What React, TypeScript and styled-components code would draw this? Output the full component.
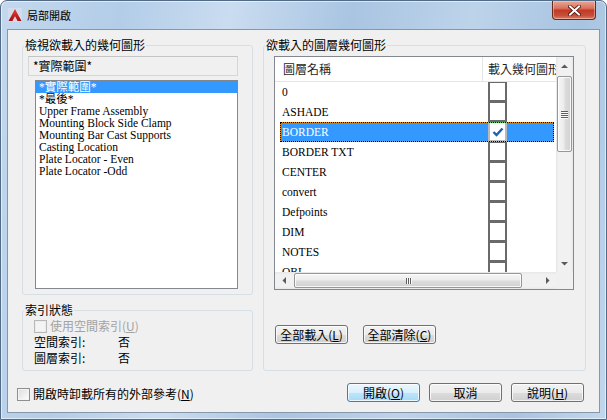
import React from "react";
import styled, { createGlobalStyle } from "styled-components";

const UI = `"Noto Sans CJK TC", "Liberation Sans", sans-serif`;
const SERIF = `"Liberation Serif", "Noto Sans CJK TC", serif`;

const GlobalStyle = createGlobalStyle`
  html, body { margin: 0; padding: 0; background: #ffffff; }
  body { font-family: ${UI}; font-size: 12px; }
  * { box-sizing: border-box; }
`;

const Window = styled.div`
  width: 607px;
  height: 420px;
  display: flex;
  flex-direction: column;
  border: 1px solid #526b87;
  border-radius: 7px 7px 0 0;
  background: linear-gradient(100deg, #c3d8ee 0%, #b3cde8 18%, #cadcf0 34%, #a9c5e2 52%, #bdd3ea 70%, #a8c4e1 86%, #c2d7ed 100%);
  box-shadow: inset 0 0 0 1px rgba(255, 255, 255, 0.55);
  overflow: hidden;
`;

const TitleBar = styled.div`
  height: 28px;
  flex: none;
  display: flex;
  align-items: center;
  padding-left: 7px;
`;

const TitleText = styled.span`
  margin-left: 5px;
  font-family: ${UI};
  font-size: 11px;
  line-height: 14px;
  color: #000;
`;

const CloseButton = styled.div`
  align-self: flex-start;
  margin-left: auto;
  margin-right: 10px;
  width: 44px;
  height: 19px;
  border: 1px solid #6a2a22;
  border-top: none;
  border-radius: 0 0 4px 4px;
  background: linear-gradient(#e9a898 0%, #d7735d 40%, #c23a27 52%, #c64d36 80%, #d9826a 100%);
  box-shadow: inset 0 0 0 1px rgba(255, 220, 210, 0.45);
  display: flex;
  align-items: center;
  justify-content: center;
`;

const Client = styled.div`
  flex: 1;
  margin: 0 6px 6px;
  border: 1px solid #8796a8;
  background: #f0f0f0;
  display: flex;
  flex-direction: column;
  font-family: ${UI};
  font-size: 12px;
  color: #000;
`;

const TopArea = styled.div`
  display: flex;
  gap: 10px;
  margin-top: 9px;
  padding-left: 14px;
`;

const LeftColumn = styled.div`
  width: 231px;
  display: flex;
  flex-direction: column;
  gap: 9px;
`;

const Group = styled.fieldset<{ $w: number; $h: number }>`
  margin: 0;
  padding: 0;
  min-width: 0;
  width: ${(p) => p.$w}px;
  height: ${(p) => p.$h}px;
  border: 1px solid #d5dfe5;
  border-radius: 3px;
`;

const Legend = styled.legend`
  padding: 0 1px;
  margin-left: 1px;
  font-size: 12px;
  line-height: 12px;
  height: 12px;
  color: #000;
`;

const ReadonlyBox = styled.div`
  margin: 5px 0 0 5px;
  width: 210px;
  height: 20px;
  border: 1px solid #d6d6d6;
  border-top-color: #c4c4c4;
  background: #f0f0f0;
  padding-left: 4px;
  line-height: 18px;
  font-size: 12px;
`;

const ListBox = styled.div`
  margin: 4px 0 0 12px;
  width: 203px;
  height: 209px;
  border: 1px solid #828790;
  background: #fff;
  overflow: hidden;
`;

const ListItem = styled.div<{ $selected?: boolean }>`
  height: 12px;
  line-height: 12px;
  padding-left: 3px;
  font-family: ${SERIF};
  font-size: 11.5px;
  white-space: nowrap;
  background: ${(p) => (p.$selected ? "#3399ff" : "transparent")};
  color: ${(p) => (p.$selected ? "#fff" : "#000")};
`;

const IndexRows = styled.div`
  margin-top: 2px;
  padding-left: 11px;
  display: flex;
  flex-direction: column;
`;

const IndexRow = styled.div`
  height: 16px;
  display: flex;
  align-items: center;
`;

const Check = styled.span<{ $disabled?: boolean }>`
  width: 13px;
  height: 13px;
  flex: none;
  border: 1px solid ${(p) => (p.$disabled ? "#b8b8b8" : "#8e8f8f")};
  background: ${(p) =>
    p.$disabled ? "#f4f4f4" : "linear-gradient(135deg, #dcdcdc 0%, #f0f0f0 60%, #ffffff 100%)"};
  box-shadow: inset 0 0 0 1px ${(p) => (p.$disabled ? "#ececec" : "#f4f4f4")};
`;

const CheckText = styled.span<{ $disabled?: boolean }>`
  margin-left: 3px;
  line-height: 14px;
  white-space: nowrap;
  color: ${(p) => (p.$disabled ? "#a3a3a3" : "#000")};
`;

const KeyLabel = styled.span`
  width: 84px;
  line-height: 14px;
`;

const ValueLabel = styled.span`
  line-height: 14px;
`;

const ListView = styled.div`
  margin: 5px 0 0 10px;
  width: 300px;
  height: 234px;
  border: 1px solid #828790;
  display: grid;
  grid-template-columns: 281px 17px;
  grid-template-rows: 215px 17px;
  background: #fff;
`;

const Viewport = styled.div`
  overflow: hidden;
  background: #fff;
`;

const Header = styled.div`
  height: 25px;
  display: flex;
  border-bottom: 1px solid #e5e5e5;
`;

const HeaderCell = styled.div<{ $w?: number; $pad: number }>`
  ${(p) => (p.$w ? `width: ${p.$w}px; flex: none;` : "flex: 1; min-width: 0;")}
  padding-left: ${(p) => p.$pad}px;
  line-height: 23px;
  font-size: 12px;
  color: #1e1e1e;
  white-space: nowrap;
  overflow: hidden;
  border-right: ${(p) => (p.$w ? "1px solid #e5e5e5" : "none")};
`;

const Row = styled.div<{ $selected?: boolean }>`
  margin-left: 5px;
  width: 274px;
  height: 20px;
  display: flex;
  align-items: stretch;
  background: ${(p) => (p.$selected ? "#3399ff" : "transparent")};
  color: ${(p) => (p.$selected ? "#fff" : "#000")};
  ${(p) =>
    p.$selected
      ? "box-shadow: inset 0 0 0 1px #e8901a; outline: 1px dotted #000; outline-offset: -1px;"
      : ""}
`;

const NameCell = styled.div`
  width: 208px;
  flex: none;
  padding-left: 2px;
  line-height: 20px;
  font-family: ${SERIF};
  font-size: 11.5px;
  white-space: nowrap;
  overflow: hidden;
`;

const CellBox = styled.div<{ $selected?: boolean }>`
  width: 19px;
  height: 20px;
  flex: none;
  border-style: solid;
  border-width: 1px 2px 2px 2px;
  border-color: ${(p) => (p.$selected ? "#6fd36f #b9b9b9 #b9b9b9 #b9b9b9" : "#6a6a6a")};
  border-top-style: ${(p) => (p.$selected ? "dotted" : "solid")};
  background: #fff;
  display: flex;
  align-items: center;
  justify-content: center;
`;

const VScroll = styled.div`
  grid-column: 2;
  grid-row: 1;
  display: flex;
  flex-direction: column;
  background: linear-gradient(to right, #e6e6e6 0%, #f1f1f1 15%, #f1f1f1 85%, #e9e9e9 100%);
`;

const HScroll = styled.div`
  grid-column: 1;
  grid-row: 2;
  display: flex;
  background: linear-gradient(to bottom, #e6e6e6 0%, #f1f1f1 15%, #f1f1f1 85%, #e9e9e9 100%);
`;

const Corner = styled.div`
  grid-column: 2;
  grid-row: 2;
  background: #f0f0f0;
`;

const ArrowBtn = styled.div`
  width: 17px;
  height: 17px;
  flex: none;
  display: flex;
  align-items: center;
  justify-content: center;
`;

const Spacer = styled.div`
  flex: 1;
`;

const VThumb = styled.div`
  margin: 2px 0 0 1px;
  width: 15px;
  height: 76px;
  border: 1px solid #979797;
  border-radius: 2px;
  background: linear-gradient(to right, #f6f6f6 0%, #ececec 45%, #dcdcdc 55%, #d2d2d2 100%);
  box-shadow: inset 0 0 0 1px rgba(255, 255, 255, 0.8);
  display: flex;
  flex-direction: column;
  align-items: center;
  justify-content: center;
  gap: 1px;
`;

const HThumb = styled.div`
  margin: 1px 0 0 2px;
  width: 228px;
  height: 15px;
  border: 1px solid #979797;
  border-radius: 2px;
  background: linear-gradient(to bottom, #f6f6f6 0%, #ececec 45%, #dcdcdc 55%, #d2d2d2 100%);
  box-shadow: inset 0 0 0 1px rgba(255, 255, 255, 0.8);
  display: flex;
  align-items: center;
  justify-content: center;
  gap: 1px;
`;

const GripH = styled.span`
  width: 7px;
  height: 1px;
  background: #5e5e5e;
  box-shadow: 0 1px 0 #fafafa;
`;

const GripV = styled.span`
  width: 1px;
  height: 6px;
  background: #5e5e5e;
  box-shadow: 1px 0 0 #fafafa;
`;

const ButtonRow = styled.div`
  margin: 35px 0 0 11px;
  display: flex;
  gap: 15px;
`;

const Button = styled.div<{ $default?: boolean }>`
  width: 73px;
  height: 19px;
  flex: none;
  font-family: ${UI};
  font-size: 12px;
  line-height: 17px;
  text-align: center;
  color: #000;
  white-space: nowrap;
  border: 1px solid ${(p) => (p.$default ? "#3c7fb1" : "#707070")};
  border-radius: 3px;
  background: ${(p) =>
    p.$default
      ? "linear-gradient(#eaf6fd 0%, #d9f0fc 50%, #bee6fd 50%, #a7d9f5 100%)"
      : "linear-gradient(#f2f2f2 0%, #ebebeb 50%, #dddddd 50%, #cfcfcf 100%)"};
  box-shadow: inset 0 0 0 1px rgba(255, 255, 255, 0.75);
`;

const BottomRow = styled.div`
  margin-top: 12px;
  padding: 0 15px 0 9px;
  display: flex;
  align-items: flex-start;
`;

const BottomCheck = styled.div`
  display: flex;
  align-items: center;
  margin-top: 4px;
`;

const Buttons = styled.div`
  margin-left: auto;
  display: flex;
  gap: 9px;
`;

type Dir = "up" | "down" | "left" | "right";
const ArrowGlyph = ({ dir }: { dir: Dir }) => {
  const vertical = dir === "up" || dir === "down";
  const pts: Record<Dir, string> = {
    up: "0,4 3.5,0.5 7,4",
    down: "0,0 7,0 3.5,3.5",
    left: "4,0 4,7 0.5,3.5",
    right: "0,0 0,7 3.5,3.5",
  };
  return (
    <svg width={vertical ? 7 : 4} height={vertical ? 4 : 7} viewBox={vertical ? "0 0 7 4" : "0 0 4 7"}>
      <polygon points={pts[dir]} fill="#5a5a5a" />
    </svg>
  );
};

const AcadIcon = () => (
  <svg width="14" height="14" viewBox="0 0 14 14">
    <defs>
      <linearGradient id="acadg" x1="0" y1="0" x2="0" y2="1">
        <stop offset="0" stopColor="#ea4235" />
        <stop offset="1" stopColor="#a30e12" />
      </linearGradient>
    </defs>
    <rect x="0" y="0" width="14" height="14" fill="#f3e9e9" opacity="0.35" />
    <polygon points="7,1 13.5,13 9.6,13 7,8.3 4.4,13 0.5,13" fill="url(#acadg)" />
    <polygon points="7,9.6 8.6,13 5.4,13" fill="#f2c9c6" />
  </svg>
);

const CloseGlyph = () => (
  <svg width="13" height="11" viewBox="0 0 13 11">
    <path d="M2 1.5 L11 9.5 M11 1.5 L2 9.5" stroke="#4a1008" strokeWidth="3.6" strokeLinecap="square" />
    <path d="M2 1.5 L11 9.5 M11 1.5 L2 9.5" stroke="#ffffff" strokeWidth="2" strokeLinecap="square" />
  </svg>
);

const CheckMark = () => (
  <svg width="12" height="10" viewBox="0 0 12 10">
    <path d="M1.5 5 L4.5 8 L10.5 1.5" stroke="#1d5fb3" strokeWidth="2.4" fill="none" />
  </svg>
);

const geometryItems = [
  "*實際範圍*",
  "*最後*",
  "Upper Frame Assembly",
  "Mounting Block Side Clamp",
  "Mounting Bar Cast Supports",
  "Casting Location",
  "Plate Locator - Even",
  "Plate Locator -Odd",
];

const layers = ["0", "ASHADE", "BORDER", "BORDER TXT", "CENTER", "convert", "Defpoints", "DIM", "NOTES", "OBL"];

export default function App() {
  return (
    <>
      <GlobalStyle />
      <Window>
        <TitleBar>
          <AcadIcon />
          <TitleText>局部開啟</TitleText>
          <CloseButton>
            <CloseGlyph />
          </CloseButton>
        </TitleBar>
        <Client>
          <TopArea>
            <LeftColumn>
              <Group $w={231} $h={256}>
                <Legend>檢視欲載入的幾何圖形</Legend>
                <ReadonlyBox>*實際範圍*</ReadonlyBox>
                <ListBox>
                  {geometryItems.map((it, i) => (
                    <ListItem key={it} $selected={i === 0}>
                      {it}
                    </ListItem>
                  ))}
                </ListBox>
              </Group>
              <Group $w={231} $h={67}>
                <Legend>索引狀態</Legend>
                <IndexRows>
                  <IndexRow>
                    <Check $disabled />
                    <CheckText $disabled>
                      使用空間索引(<u>U</u>)
                    </CheckText>
                  </IndexRow>
                  <IndexRow>
                    <KeyLabel>空間索引:</KeyLabel>
                    <ValueLabel>否</ValueLabel>
                  </IndexRow>
                  <IndexRow>
                    <KeyLabel>圖層索引:</KeyLabel>
                    <ValueLabel>否</ValueLabel>
                  </IndexRow>
                </IndexRows>
              </Group>
            </LeftColumn>
            <Group $w={323} $h={332}>
              <Legend>欲載入的圖層幾何圖形</Legend>
              <ListView>
                <Viewport>
                  <Header>
                    <HeaderCell $w={208} $pad={8}>
                      圖層名稱
                    </HeaderCell>
                    <HeaderCell $pad={5}>載入幾何圖形</HeaderCell>
                  </Header>
                  {layers.map((name, i) => (
                    <Row key={name} $selected={i === 2}>
                      <NameCell>{name}</NameCell>
                      <CellBox $selected={i === 2}>{i === 2 ? <CheckMark /> : null}</CellBox>
                    </Row>
                  ))}
                </Viewport>
                <VScroll>
                  <ArrowBtn>
                    <ArrowGlyph dir="up" />
                  </ArrowBtn>
                  <VThumb>
                    <GripH />
                    <GripH />
                    <GripH />
                    <GripH />
                  </VThumb>
                  <Spacer />
                  <ArrowBtn>
                    <ArrowGlyph dir="down" />
                  </ArrowBtn>
                </VScroll>
                <HScroll>
                  <ArrowBtn>
                    <ArrowGlyph dir="left" />
                  </ArrowBtn>
                  <HThumb>
                    <GripV />
                    <GripV />
                    <GripV />
                  </HThumb>
                  <Spacer />
                  <ArrowBtn>
                    <ArrowGlyph dir="right" />
                  </ArrowBtn>
                </HScroll>
                <Corner />
              </ListView>
              <ButtonRow>
                <Button>
                  全部載入(<u>L</u>)
                </Button>
                <Button>
                  全部清除(<u>C</u>)
                </Button>
              </ButtonRow>
            </Group>
          </TopArea>
          <BottomRow>
            <BottomCheck>
              <Check />
              <CheckText>
                開啟時卸載所有的外部參考(<u>N</u>)
              </CheckText>
            </BottomCheck>
            <Buttons>
              <Button $default>
                開啟(<u>O</u>)
              </Button>
              <Button>取消</Button>
              <Button>
                說明(<u>H</u>)
              </Button>
            </Buttons>
          </BottomRow>
        </Client>
      </Window>
    </>
  );
}
